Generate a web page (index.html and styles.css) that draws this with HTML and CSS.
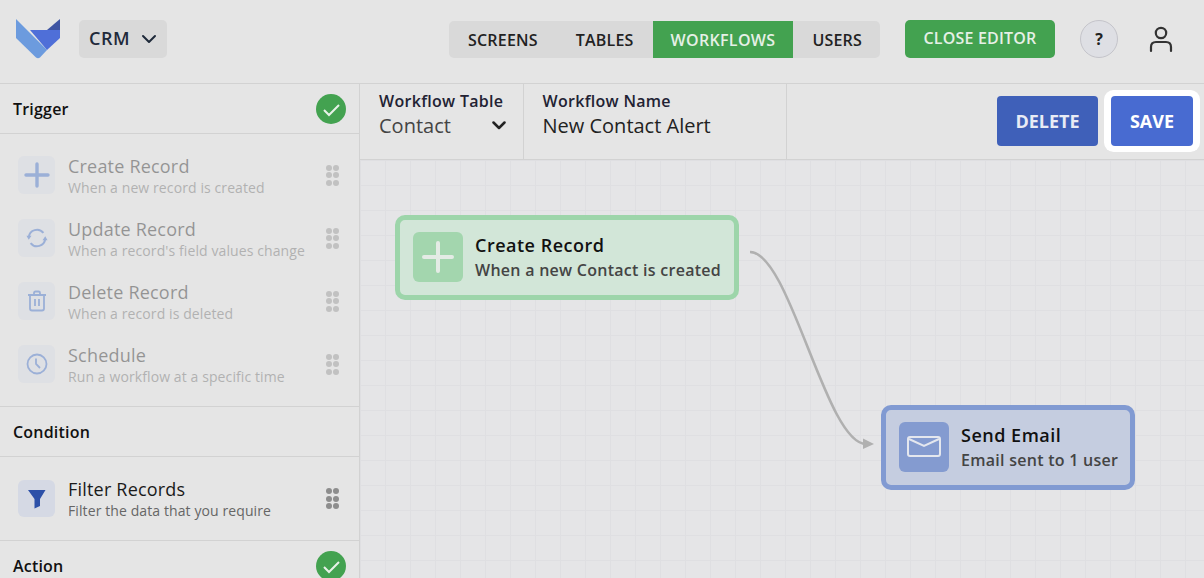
FILE: index.html
```html
<!DOCTYPE html>
<html>
  <head>
    <meta charset="utf-8">
    <meta name="viewport" content="width=device-width, initial-scale=1.0">
    <title>Workflow Editor</title>
    <link rel="stylesheet" href="styles.css">
  </head>
  <body>
    <header class="topbar">
      <svg class="logo" width="44" height="40" viewBox="0 0 44 40">
        <path d="M0 0 L31 31 L24 38.5 Q22 40 20 38.5 L0 19 Z" fill="#6c9bde"/>
        <path d="M14 11 H44 V19 L31 31 Z" fill="#4f6fd8"/>
        <path d="M31 11 L44 0 V11 Z" fill="#3f55a3"/>
      </svg>
      <button class="app-select"><span class="app-name">CRM</span>
        <svg width="16" height="10" viewBox="0 0 16 10"><path d="M2 2 L8 8 L14 2" fill="none" stroke="#1f2a3a" stroke-width="2" stroke-linecap="round" stroke-linejoin="round"/></svg>
      </button>
      <nav class="tabs">
        <a class="tab">SCREENS</a>
        <a class="tab">TABLES</a>
        <a class="tab tab-active">WORKFLOWS</a>
        <a class="tab">USERS</a>
      </nav>
      <button class="close-editor">CLOSE EDITOR</button>
      <button class="help">?</button>
      <svg class="user" width="24" height="28" viewBox="0 0 24 28">
        <circle cx="12" cy="8" r="5.2" fill="none" stroke="#333" stroke-width="2.2"/>
        <path d="M2 26 V22 Q2 17 7 17 H17 Q22 17 22 22 V26" fill="none" stroke="#333" stroke-width="2.2" stroke-linecap="round"/>
      </svg>
    </header>

    <div class="main">
      <aside class="sidebar">
        <div class="section-head">
          <span>Trigger</span>
          <svg class="check" width="30" height="30" viewBox="0 0 30 30"><circle cx="15" cy="15" r="15" fill="#43a250"/><path d="M8 16 L13 21 L23 11" fill="none" stroke="#e8f2e8" stroke-width="2"/></svg>
        </div>
        <div class="section-list list-trigger">
          <div class="item item-off">
            <div class="tile">
              <svg width="26" height="26" viewBox="0 0 26 26"><path d="M13 2 V24 M2 13 H24" stroke="#2f62c4" stroke-width="3.4" stroke-linecap="round"/></svg>
            </div>
            <div class="item-text"><div class="item-title">Create Record</div><div class="item-sub">When a new record is created</div></div>
            <div class="grip"><i></i><i></i><i></i><i></i><i></i><i></i></div>
          </div>
          <div class="item item-off">
            <div class="tile">
              <svg width="22" height="22" viewBox="0 0 24 24"><path d="M3 11 A9 9 0 0 1 19 6.5 M21 13 A9 9 0 0 1 5 17.5" fill="none" stroke="#2f62c4" stroke-width="2.2"/><path d="M0.5 9.5 H6 L3 14 Z M18 14.500 H23.500 L21 10 Z" fill="#2f62c4"/></svg>
            </div>
            <div class="item-text"><div class="item-title">Update Record</div><div class="item-sub">When a record's field values change</div></div>
            <div class="grip"><i></i><i></i><i></i><i></i><i></i><i></i></div>
          </div>
          <div class="item item-off">
            <div class="tile">
              <svg width="20" height="22" viewBox="0 0 20 22"><path d="M1 5 H19 M7 5 V3 Q7 1.500 8.500 1.500 H11.500 Q13 1.500 13 3 V5 M3 5 V18.500 Q3 20.500 5 20.500 H15 Q17 20.500 17 18.500 V5 M8 9 V16 M12 9 V16" fill="none" stroke="#2f62c4" stroke-width="1.800"/></svg>
            </div>
            <div class="item-text"><div class="item-title">Delete Record</div><div class="item-sub">When a record is deleted</div></div>
            <div class="grip"><i></i><i></i><i></i><i></i><i></i><i></i></div>
          </div>
          <div class="item item-off">
            <div class="tile">
              <svg width="22" height="22" viewBox="0 0 22 22"><circle cx="11" cy="11" r="9.500" fill="none" stroke="#2f62c4" stroke-width="1.800"/><path d="M10 5.500 V11 L14 15" fill="none" stroke="#2f62c4" stroke-width="1.800"/></svg>
            </div>
            <div class="item-text"><div class="item-title">Schedule</div><div class="item-sub">Run a workflow at a specific time</div></div>
            <div class="grip"><i></i><i></i><i></i><i></i><i></i><i></i></div>
          </div>
        </div>
        <div class="section-head">
          <span>Condition</span>
        </div>
        <div class="section-list list-condition">
          <div class="item">
            <div class="tile">
              <svg width="20" height="20" viewBox="0 0 20 20"><path d="M1 1 H18.500 L13 10 V17 L7.500 19.500 V10 Z" fill="#2c50a8"/></svg>
            </div>
            <div class="item-text"><div class="item-title">Filter Records</div><div class="item-sub">Filter the data that you require</div></div>
            <div class="grip"><i></i><i></i><i></i><i></i><i></i><i></i></div>
          </div>
        </div>
        <div class="section-head">
          <span>Action</span>
          <svg class="check" width="30" height="30" viewBox="0 0 30 30"><circle cx="15" cy="15" r="15" fill="#43a250"/><path d="M8 16 L13 21 L23 11" fill="none" stroke="#e8f2e8" stroke-width="2"/></svg>
        </div>
      </aside>

      <section class="editor">
        <div class="toolbar">
          <div class="field field-table">
            <label>Workflow Table</label>
            <div class="field-value field-select">Contact
              <svg width="14" height="9" viewBox="0 0 14 9"><path d="M1.500 1.500 L7 7 L12.500 1.500" fill="none" stroke="#222" stroke-width="2.5" stroke-linecap="round" stroke-linejoin="round"/></svg>
            </div>
          </div>
          <div class="field field-name">
            <label>Workflow Name</label>
            <div class="field-value field-dark">New Contact Alert</div>
          </div>
          <div class="actions">
            <button class="btn btn-delete">DELETE</button>
            <button class="btn btn-save">SAVE</button>
          </div>
        </div>
        <div class="canvas">
          <svg class="wires" width="844" height="418" viewBox="0 0 844 418">
            <path d="M390 92 C430 92 466 284 506 284" fill="none" stroke="#b0b0b0" stroke-width="2.600"/>
            <path d="M503 278.500 L514 284 L503 289 Z" fill="#b0b0b0"/>
          </svg>
          <div class="node node-green">
            <div class="node-icon">
              <svg width="32" height="32" viewBox="0 0 32 32"><path d="M16 2 V30 M2 16 H30" stroke="#e4ebe5" stroke-width="4" stroke-linecap="round"/></svg>
            </div>
            <div>
              <div class="node-title">Create Record</div>
              <div class="node-sub">When a new Contact is created</div>
            </div>
          </div>
          <div class="node node-blue">
            <div class="node-icon">
              <svg width="34" height="22" viewBox="0 0 34 22"><rect x="1" y="1" width="32" height="19" rx="2" fill="none" stroke="#e4e7ee" stroke-width="2"/><path d="M2 3 L17 10 L32 3" fill="none" stroke="#e4e7ee" stroke-width="2"/></svg>
            </div>
            <div>
              <div class="node-title">Send Email</div>
              <div class="node-sub">Email sent to 1 user</div>
            </div>
          </div>
        </div>
      </section>
    </div>
  </body>
</html>
```

FILE: styles.css
```css
html, body {
  width: 100%;
  height: 100%;
  margin: 0;
  padding: 0;
  background-color: #e5e5e5;
  color: #222;
  font-family: "Open Sans", sans-serif;
  overflow: hidden;
}
button {
  font-family: inherit;
  border: 0;
  padding: 0;
  cursor: pointer;
}
body {
  display: flex;
  flex-direction: column;
}

/* top bar */
.topbar {
  height: 83px;
  flex: none;
  box-sizing: content-box;
  display: flex;
  align-items: flex-start;
  padding-left: 16px;
  border-bottom: 1px solid #d2d2d2;
}
.logo {
  margin-top: 19px;
  flex: none;
}
.app-select {
  margin: 20px 0 0 19px;
  width: 88px;
  height: 38px;
  background: #d9d9d9;
  border-radius: 5px;
  color: #1f2a3a;
  font-size: 18px;
  font-weight: 600;
  display: flex;
  align-items: center;
  justify-content: space-between;
  padding: 0 10px;
  box-sizing: border-box;
}
.app-name {
  letter-spacing: 0.6px;
  margin-top: -2px;
}
.tabs {
  margin: 21px 0 0 282px;
  height: 37px;
  width: 431px;
  display: flex;
  background: #d9d9d9;
  border-radius: 5px;
  overflow: hidden;
}
.tab {
  padding: 0 19px;
  line-height: 38px;
  font-size: 16px;
  font-weight: 600;
  letter-spacing: 0.2px;
  color: #222;
}
.tab-active {
  padding: 0 18px;
  letter-spacing: 0.33px;
  background: #43a250;
  color: #e6f0e6;
}
.close-editor {
  margin: 20px 0 0 25px;
  width: 150px;
  height: 38px;
  padding-bottom: 2px;
  background: #43a250;
  color: #e6f0e6;
  border-radius: 5px;
  font-size: 16px;
  font-weight: 600;
  letter-spacing: 0.2px;
}
.help {
  margin: 20px 0 0 25px;
  width: 38px;
  height: 38px;
  border-radius: 50%;
  background: #dedfe4;
  border: 1px solid #c4c4ca;
  box-sizing: border-box;
  color: #222;
  font-size: 16px;
  font-weight: 700;
}
.user {
  margin: 25px 0 0 31px;
}

/* sidebar */
.main {
  flex: 1;
  display: flex;
  min-height: 0;
}
.sidebar {
  width: 359px;
  flex: none;
  border-right: 1px solid #d2d2d2;
}
.section-head {
  height: 49px;
  display: flex;
  align-items: center;
  justify-content: space-between;
  padding: 0 13px;
  border-bottom: 1px solid #d2d2d2;
  font-size: 16px;
  font-weight: 600;
  letter-spacing: 0.2px;
  color: #111;
}
.section-list {
  border-bottom: 1px solid #d2d2d2;
  padding: 22px 14px 23px 18px;
  display: flex;
  flex-direction: column;
  gap: 25px;
}
.list-trigger .item-text {
  padding-top: 2px;
}
.list-condition {
  padding-top: 23px;
}
.list-condition .item {
  height: 37px;
}
.item {
  display: flex;
  align-items: center;
  height: 38px;
}
.item-off {
  opacity: 0.4;
}
.tile {
  width: 37px;
  height: 100%;
  flex: none;
  border-radius: 6px;
  background: #d5d9e4;
  display: flex;
  align-items: center;
  justify-content: center;
}
.item-text {
  flex: 1;
  margin-left: 13px;
}
.item-title {
  font-size: 18px;
  line-height: 23px;
  letter-spacing: 0.2px;
  color: #1a1a1a;
}
.item-sub {
  font-size: 14px;
  line-height: 19px;
  letter-spacing: 0.1px;
  color: #666;
}
.grip {
  display: grid;
  grid-template-columns: 6px 6px;
  gap: 1.500px 1px;
  margin-right: 6px;
}
.grip i {
  width: 6px;
  height: 6px;
  border-radius: 50%;
  background: #8d8d8d;
}

/* editor */
.editor {
  flex: 1;
  min-width: 0;
  display: flex;
  flex-direction: column;
}
.toolbar {
  height: 75px;
  flex: none;
  display: flex;
  border-bottom: 1px solid #d2d2d2;
}
.field {
  box-sizing: border-box;
  border-right: 1px solid #d2d2d2;
  padding-top: 7px;
}
.field label {
  display: block;
  font-size: 16px;
  line-height: 21px;
  font-weight: 600;
  letter-spacing: 0.3px;
  color: #223;
}
.field-value {
  font-size: 20px;
  line-height: 27px;
  color: #444;
}
.field-dark {
  color: #222;
}
.field-table {
  width: 164px;
  padding-left: 19px;
}
.field-select {
  display: flex;
  align-items: center;
  justify-content: space-between;
  padding-right: 17px;
}
.field-name {
  width: 263px;
  padding-left: 18.5px;
}
.actions {
  flex: 1;
  display: flex;
  justify-content: flex-end;
  align-items: flex-start;
  gap: 13px;
  padding: 12px 11px 0 0;
}
.btn {
  height: 50px;
  border-radius: 4px;
  color: #e8ebf5;
  font-size: 18px;
  font-weight: 700;
}
.btn-delete {
  width: 101px;
  background: #3f60b9;
}
.btn-save {
  width: 82px;
  background: #486bd1;
  color: #fff;
  box-shadow: 1px 0 0 6px #fff, -1px 0 0 6px #fff;
}

/* canvas */
.canvas {
  flex: 1;
  position: relative;
  overflow: hidden;
  background-color: #e5e5e7;
  background-image:
    linear-gradient(to right, #dfdfe2 1px, transparent 1px),
    linear-gradient(to bottom, #dfdfe2 1px, transparent 1px);
  background-size: 25px 25px;
  background-position: 25px 0;
}
.wires {
  position: absolute;
  left: 0;
  top: 0;
}
.node {
  position: absolute;
  box-sizing: border-box;
  height: 85px;
  border-radius: 10px;
  border: 5px solid;
  display: flex;
  align-items: center;
  padding: 0 0 1px 13px;
}
.node-green {
  left: 35px;
  top: 55px;
  width: 344px;
  background: #d2e6d8;
  border-color: #9dd5aa;
}
.node-blue {
  left: 521px;
  top: 245px;
  width: 254px;
  background: #c5cde0;
  border-color: #819ad2;
}
.node-icon {
  width: 50px;
  height: 50px;
  flex: none;
  margin-right: 12px;
  border-radius: 6px;
  display: flex;
  align-items: center;
  justify-content: center;
}
.node-green .node-icon {
  background: #a3d6ae;
}
.node-blue .node-icon {
  background: #849bd0;
}
.node-title {
  font-size: 18px;
  line-height: 24px;
  font-weight: 600;
  letter-spacing: 0.5px;
  color: #111;
}
.node-sub {
  margin-top: 1px;
  font-size: 16px;
  line-height: 24px;
  font-weight: 600;
  letter-spacing: 0.27px;
  color: #444;
}
```
